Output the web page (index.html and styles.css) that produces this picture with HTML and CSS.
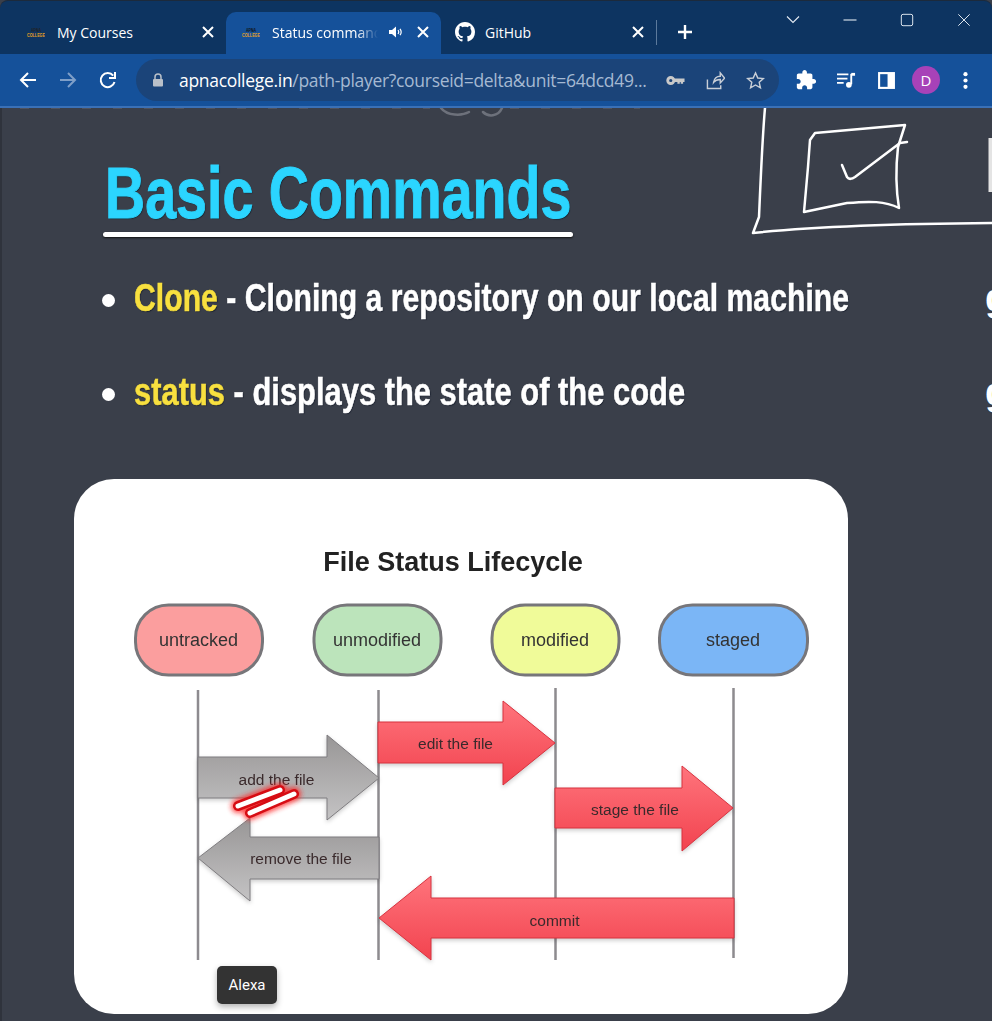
FILE: index.html
```html
<!DOCTYPE html>
<html>
  <head>
    <meta charset="utf-8">
    <title>Status command</title>
    <link rel="stylesheet" href="styles.css">
  </head>
  <body>
    <div id="tabstrip">
      <div class="tab">
        <svg class="favicon" viewBox="0 0 18 10"><text x="9" y="4.500" class="fav-top" textLength="10" lengthAdjust="spacingAndGlyphs">APNA</text><text x="9" y="9.500" class="fav-bottom" textLength="18" lengthAdjust="spacingAndGlyphs">COLLEGE</text></svg>
        <span class="tab-title">My Courses</span>
        <svg class="tab-close" viewBox="0 0 14 14"><path d="M2 2l10 10M12 2L2 12"/></svg>
      </div>
      <div class="tab active">
        <svg class="favicon" viewBox="0 0 18 10"><text x="9" y="4.500" class="fav-top" textLength="10" lengthAdjust="spacingAndGlyphs">APNA</text><text x="9" y="9.500" class="fav-bottom" textLength="18" lengthAdjust="spacingAndGlyphs">COLLEGE</text></svg>
        <span class="tab-title fade">Status command</span>
        <svg class="speaker" viewBox="0 0 14 14"><path d="M1 5h3l4-3.500v11L4 9H1z" fill="#fff"/><path d="M10 5c.9 1.200.9 2.800 0 4M12 3.800c1.400 1.900 1.400 4.500 0 6.400" class="speaker-wave"/></svg>
        <svg class="tab-close" viewBox="0 0 14 14"><path d="M2 2l10 10M12 2L2 12"/></svg>
      </div>
      <div class="tab">
        <svg class="gh-icon" viewBox="0 0 16 16"><path fill="#fff" d="M8 0C3.58 0 0 3.58 0 8c0 3.54 2.29 6.53 5.47 7.59.4.07.55-.17.55-.38 0-.19-.01-.82-.01-1.49-2.01.37-2.53-.49-2.69-.94-.09-.23-.48-.94-.82-1.13-.28-.15-.68-.52-.01-.53.63-.01 1.08.58 1.23.82.72 1.21 1.87.87 2.33.66.07-.52.28-.87.51-1.07-1.78-.2-3.64-.89-3.64-3.95 0-.87.31-1.59.82-2.15-.08-.2-.36-1.02.08-2.12 0 0 .67-.21 2.2.82.64-.18 1.32-.27 2-.27.68 0 1.36.09 2 .27 1.53-1.04 2.2-.82 2.2-.82.44 1.1.16 1.92.08 2.12.51.56.82 1.27.82 2.15 0 3.07-1.87 3.75-3.65 3.95.29.25.54.73.54 1.48 0 1.07-.01 1.93-.01 2.2 0 .21.15.46.55.38A8.013 8.013 0 0016 8c0-4.42-3.58-8-8-8z"/></svg>
        <span class="tab-title">GitHub</span>
        <svg class="tab-close" viewBox="0 0 14 14"><path d="M2 2l10 10M12 2L2 12"/></svg>
      </div>
      <div class="tab-sep"></div>
      <svg class="new-tab" viewBox="0 0 16 16"><path d="M8 1v14M1 8h14"/></svg>
      <div class="win-controls">
        <svg class="win-btn" viewBox="0 0 16 12"><path d="M2 2.500l6 6 6-6"/></svg>
        <svg class="win-btn" viewBox="0 0 16 12"><path d="M1.500 6h13"/></svg>
        <svg class="win-btn" viewBox="0 0 16 16"><rect x="1.500" y="1.500" width="13" height="13" rx="2"/></svg>
        <svg class="win-btn" viewBox="0 0 16 16"><path d="M1.500 1.500l13 13M14.500 1.500l-13 13"/></svg>
      </div>
    </div>

    <div id="toolbar">
      <svg class="nav-icon" viewBox="0 0 18 18"><path d="M17 9H2M9 2L2 9l7 7"/></svg>
      <svg class="nav-icon dim" viewBox="0 0 18 18"><path d="M1 9h15M9 2l7 7-7 7"/></svg>
      <svg class="nav-icon" viewBox="0 0 18 18"><path d="M15.500 11a7 7 0 1 1-1.300-6.300"/><path d="M16 1v6h-6" class="solid"/></svg>
      <div id="omnibox">
        <svg class="lock" viewBox="0 0 12 14"><path d="M3 6V4a3 3 0 0 1 6 0v2" fill="none" stroke="#b9c0c9" stroke-width="1.500"/><rect x="1" y="6" width="10" height="7.500" rx="1" fill="#b9c0c9"/></svg>
        <div class="url"><span class="host">apnacollege.in</span>/path-player?courseid=delta&amp;unit=64dcd49...</div>
        <svg class="omni-icon key" viewBox="0 0 20 12"><circle cx="5" cy="6" r="3.200" fill="none" stroke="#c9c9c9" stroke-width="3"/><path d="M8 4h11.500v3.500H18v2h-2.500v-2h-1v2H12v-2H8z" fill="#c9c9c9"/></svg>
        <svg class="omni-icon share" viewBox="0 0 20 20"><path d="M1.500 9v9.500h14V15M8 12c.5-4 3.500-6.500 7-6.500V2l4.500 5.500L15 12.500V9c-3 0-5.500 1-7 3z"/></svg>
        <svg class="omni-icon star" viewBox="0 0 20 20"><path d="M10 2l2.400 5.400 5.900.6-4.400 3.900 1.300 5.800L10 14.700 4.800 17.700l1.300-5.800L1.700 8l5.900-.6z"/></svg>
      </div>
      <svg class="tool-icon puzzle" viewBox="0 0 24 24"><path fill="#fff" d="M20.500 11H19V7c0-1.100-.9-2-2-2h-4V3.500C13 2.120 11.880 1 10.500 1S8 2.120 8 3.500V5H4c-1.100 0-1.990.9-1.990 2v3.800H3.500c1.490 0 2.700 1.210 2.700 2.700s-1.210 2.700-2.700 2.700H2V20c0 1.100.9 2 2 2h3.800v-1.500c0-1.490 1.210-2.700 2.700-2.700 1.490 0 2.700 1.210 2.700 2.700V22H17c1.100 0 2-.9 2-2v-4h1.500c1.380 0 2.500-1.120 2.500-2.500S21.880 11 20.500 11z"/></svg>
      <svg class="tool-icon" viewBox="0 0 20 18"><path d="M0 2.500h12M0 7h11M0 11.500h7" stroke="#fff" stroke-width="1.800" fill="none"/><path d="M15 2v11" stroke="#fff" stroke-width="2" fill="none"/><path d="M15 1h4v3h-4z" fill="#fff"/><circle cx="12.500" cy="13.500" r="3" fill="#fff"/></svg>
      <svg class="tool-icon" viewBox="0 0 18 18"><rect x="1" y="1" width="16" height="16" fill="#fff"/><rect x="3" y="3" width="7" height="12" fill="#14519a"/></svg>
      <div class="avatar">D</div>
      <svg class="tool-icon" viewBox="0 0 18 18"><circle cx="9" cy="3" r="2" fill="#fff"/><circle cx="9" cy="9" r="2" fill="#fff"/><circle cx="9" cy="15" r="2" fill="#fff"/></svg>
    </div>

    <div id="slide">
      <h1 class="heading">Basic Commands</h1>
      <div class="heading-rule"></div>
      <ul class="points">
        <li class="point"><span class="dot"></span><span class="point-text clone"><b>Clone</b> - Cloning a repository on our local machine</span><span class="cut">g</span></li>
        <li class="point"><span class="dot"></span><span class="point-text"><b>status</b> - displays the state of the code</span><span class="cut">g</span></li>
      </ul>

      <div class="card">
        <svg class="lifecycle" viewBox="74 479 774 535">
          <defs>
            <linearGradient id="red" x1="0" y1="0" x2="0" y2="1"><stop offset="0" stop-color="#ff747c"/><stop offset="1" stop-color="#f2434f"/></linearGradient>
            <linearGradient id="grey" x1="0" y1="0" x2="0" y2="1"><stop offset="0" stop-color="#989696"/><stop offset="1" stop-color="#c4c3c4"/></linearGradient>
            <filter id="glow" x="-30%" y="-60%" width="160%" height="220%"><feGaussianBlur stdDeviation="2.500"/></filter>
          </defs>
          <text x="453" y="571" class="life-title">File Status Lifecycle</text>

          <rect x="135.500" y="605" width="127" height="70" rx="33" class="pill" fill="#fb9e9e"/>
          <rect x="314" y="605" width="127" height="70" rx="33" class="pill" fill="#bce4bb"/>
          <rect x="492" y="605" width="127" height="70" rx="33" class="pill" fill="#f0fb99"/>
          <rect x="659.500" y="605" width="148" height="70" rx="33" class="pill" fill="#7bb6f6"/>
          <text x="198.500" y="646" class="pill-label">untracked</text>
          <text x="377" y="646" class="pill-label">unmodified</text>
          <text x="555" y="646" class="pill-label">modified</text>
          <text x="733" y="646" class="pill-label">staged</text>

          <path d="M198 690V960M378.500 690V960M555.500 688V960M733.500 688V958" class="life-line"/>

          <path d="M198 757H327V735L379 778 327 820V798H198z" fill="url(#grey)" class="grey-arrow"/>
          <path d="M379 837H250V818L198 858 250 901V879H379z" fill="url(#grey)" class="grey-arrow"/>
          <path d="M378 722H503V701L555 743 503 785V763H378z" fill="url(#red)" class="red-arrow"/>
          <path d="M555 788H682V766L733 808 682 851V828H555z" fill="url(#red)" class="red-arrow"/>
          <path d="M734 898H431V876L379 918 431 960V938H734z" fill="url(#red)" class="red-arrow"/>

          <text x="276.500" y="785" class="arrow-label">add the file</text>
          <text x="455.500" y="749" class="arrow-label">edit the file</text>
          <text x="635" y="815" class="arrow-label">stage the file</text>
          <text x="301" y="864" class="arrow-label">remove the file</text>
          <text x="554.500" y="926" class="arrow-label">commit</text>

          <path d="M238 806L280 790M250 813L294 794" class="mark-glow" filter="url(#glow)"/>
          <path d="M238 806L280 790M250 813L294 794" class="mark-red"/>
          <path d="M238 806L280 790M250 813L294 794" class="mark-white"/>
        </svg>
      </div>

      <svg class="board" viewBox="0 108 992 140">
        <path d="M20 108H430M510 108H640" class="cut-tips"/>
        <path d="M441 108C447 116 462 116 469 112M483 112C488 117 498 117 502 108" class="cut-arcs"/>
        <path d="M765 108C763 130 761 170 759 217L753 233C800 228 860 224 992 223"/>
        <path d="M815 133L905 125 898 147C896 165 896 190 899 208 885 201 870 201 847 203L804 212 808 167 810 140z"/>
        <path d="M842 165L847 177C849 180 852 179 855 177L900 143 907 142"/>
        <path d="M991 138V192" class="board-thick"/>
      </svg>
      <div class="tooltip">Alexa</div>
    </div>
  </body>
</html>
```

FILE: styles.css
```css
* {
  box-sizing: border-box;
}
html, body {
  margin: 0;
  height: 100%;
  overflow: hidden;
}
body {
  display: flex;
  flex-direction: column;
  background: #3a3f4a;
  font-family: "Open Sans", "Noto Sans", sans-serif;
}

/* tab strip */
#tabstrip {
  height: 54px;
  padding-left: 11px;
  display: flex;
  align-items: flex-end;
  background: #0d3461;
  border-top: 1px solid #1c2a3c;
  border-radius: 8px 8px 0 0;
}
.tab {
  width: 215px;
  height: 42px;
  padding: 0 11px 2px 16px;
  display: flex;
  align-items: center;
  color: #fff;
  font-size: 14px;
}
.tab.active {
  background: #15519a;
  border-radius: 10px 10px 0 0;
}
.favicon {
  width: 18px;
  height: 10px;
  margin-right: 12px;
  flex: none;
}
.fav-top {
  font: bold 4.500px "Liberation Sans", sans-serif;
  fill: #222;
  text-anchor: middle;
}
.fav-bottom {
  font: bold 5px "Liberation Sans", sans-serif;
  fill: #e3a11f;
  text-anchor: middle;
}
.tab.active .fav-top {
  fill: #111;
}
.gh-icon {
  width: 20px;
  height: 20px;
  margin-left: -2px;
  margin-right: 10px;
  flex: none;
}
.tab-title {
  flex: 1;
  white-space: nowrap;
  overflow: hidden;
}
.tab-title.fade {
  -webkit-mask-image: linear-gradient(to right, #000 80%, transparent 100%);
  mask-image: linear-gradient(to right, #000 80%, transparent 100%);
}
.speaker {
  width: 14px;
  height: 14px;
  margin: 0 14px 0 10px;
  flex: none;
}
.speaker-wave {
  fill: none;
  stroke: #fff;
  stroke-width: 1.200;
}
.tab-close {
  width: 14px;
  height: 14px;
  flex: none;
  fill: none;
  stroke: #fff;
  stroke-width: 2;
}
.tab-sep {
  width: 1px;
  height: 25px;
  margin-bottom: 9px;
  background: #5c7a9c;
}
.new-tab {
  width: 16px;
  height: 16px;
  margin: 0 0 14px 20px;
  fill: none;
  stroke: #fff;
  stroke-width: 2.400;
}
.win-controls {
  margin-left: auto;
  align-self: flex-start;
  padding: 12px 20px 0 0;
  display: flex;
  gap: 41px;
  align-items: center;
}
.win-btn {
  width: 16px;
  height: 14px;
  fill: none;
  stroke: #e4ebf3;
  stroke-width: 1.100;
}

/* toolbar */
#toolbar {
  height: 54px;
  padding: 0 17px 0 19px;
  display: flex;
  align-items: center;
  background: #15519a;
  border-bottom: 2px solid #3a70b6;
}
.nav-icon {
  width: 18px;
  height: 18px;
  margin-right: 22px;
  flex: none;
  fill: none;
  stroke: #fff;
  stroke-width: 2;
}
.nav-icon.dim {
  stroke: #7f9fc8;
}
.nav-icon .solid {
  fill: none;
  stroke: #fff;
}
#omnibox {
  width: 643px;
  height: 42px;
  margin: 0 0 0 -3px;
  padding: 0 15px 0 16px;
  display: flex;
  align-items: center;
  background: #1b4479;
  border-radius: 21px;
  flex: none;
}
.lock {
  width: 12px;
  height: 14px;
  margin-right: 15px;
  flex: none;
}
.url {
  width: 467px;
  font-size: 17.500px;
  letter-spacing: -.3px;
  color: #a5b9d2;
  white-space: nowrap;
  overflow: hidden;
  flex: none;
}
.host {
  color: #fff;
}
.omni-icon {
  width: 19px;
  height: 19px;
  margin-left: 21px;
  flex: none;
}
.omni-icon.key {
  margin-left: 20px;
}
.share, .star {
  fill: none;
  stroke: #c9cfd7;
  stroke-width: 1.500;
}
.tool-icon {
  width: 19px;
  height: 19px;
  margin-left: 21px;
  flex: none;
}
.puzzle {
  margin-left: 16px;
  width: 22px;
  height: 22px;
}
.puzzle + .tool-icon {
  margin-left: 20px;
}
.avatar {
  width: 28px;
  height: 28px;
  margin-left: 16px;
  border-radius: 50%;
  background: #a742b8;
  color: #fff;
  font-size: 15px;
  line-height: 28px;
  text-align: center;
  flex: none;
}
.avatar + .tool-icon {
  margin-left: 16px;
}

/* slide */
#slide {
  position: relative;
  flex: 1;
  overflow: hidden;
  padding-top: 45px;
  border-left: 2px solid #2f333c;
  font-family: "Liberation Sans", sans-serif;
}
.heading {
  margin: 0 0 0 103px;
  font-size: 72px;
  line-height: 80px;
  font-weight: bold;
  color: #2bd5ff;
  -webkit-text-stroke: 1px #2bd5ff;
  text-shadow: 1px 1px 1px #10212c;
  white-space: nowrap;
  transform: scaleX(.772);
  transform-origin: left;
}
.heading-rule {
  width: 470px;
  height: 5px;
  margin: -1px 0 0 101px;
  background: #fff;
  border-radius: 3px;
  box-shadow: 0 1px 2px #111;
}
.points {
  list-style: none;
  margin: 14px 0 0 0;
  padding: 0 0 0 100px;
}
.point {
  display: grid;
  grid-template-columns: 32px 851px auto;
  align-items: center;
  height: 94px;
  font-size: 38px;
  line-height: 54px;
  font-weight: bold;
  color: #fff;
  text-shadow: 1px 1px 1px #1c2230;
}
.point-text {
  white-space: nowrap;
  -webkit-text-stroke: .5px currentColor;
  transform: scaleX(.813);
  transform-origin: left;
}
.point-text.clone {
  transform: scaleX(.795);
}
.point-text b {
  color: #f8e03f;
}
.dot {
  width: 13px;
  height: 13px;
  margin: 5px 0 0 0;
  border-radius: 50%;
  background: #fff;
}
.cut {
  color: #fff;
}

/* lifecycle card */
.card {
  width: 774px;
  height: 535px;
  margin: 40px 0 0 72px;
  background: #fff;
  border-radius: 40px;
}
.lifecycle {
  display: block;
  width: 774px;
  height: 535px;
  font-family: "Liberation Sans", sans-serif;
  filter: blur(.6px);
}
.life-title {
  font-size: 27px;
  font-weight: bold;
  fill: #222;
  text-anchor: middle;
}
.pill {
  stroke: #77767a;
  stroke-width: 3;
}
.pill-label {
  font-size: 18px;
  fill: #333;
  text-anchor: middle;
}
.life-line {
  fill: none;
  stroke: #8d8b8f;
  stroke-width: 2.500;
}
.grey-arrow {
  stroke: #7f7d80;
  stroke-width: 1;
  filter: drop-shadow(0 2px 2px rgba(0, 0, 0, .2));
}
.red-arrow {
  stroke: #d8323f;
  stroke-width: 1;
  filter: drop-shadow(0 2px 2px rgba(0, 0, 0, .2));
}
.arrow-label {
  font-size: 15.500px;
  fill: #3a2a2c;
  text-anchor: middle;
}
.mark-glow, .mark-red, .mark-white {
  fill: none;
  stroke-linecap: round;
}
.mark-glow {
  stroke: #ff2020;
  stroke-width: 14;
  opacity: .8;
}
.mark-red {
  stroke: #d60d14;
  stroke-width: 10;
}
.mark-white {
  stroke: #fff;
  stroke-width: 5;
}

/* pen strokes drawn over the slide */
.board {
  position: absolute;
  left: -2px;
  top: 0;
  width: 992px;
  height: 140px;
  fill: none;
  stroke: #fff;
  stroke-width: 2.500;
  stroke-linejoin: round;
  stroke-linecap: round;
}
.board-thick {
  stroke-width: 5;
  stroke: #e4e4e4;
  stroke-linecap: butt;
}
/* bottoms of the slide line above, cut off by the toolbar */
.cut-tips {
  stroke: #555a65;
  stroke-width: 1.500;
  stroke-linecap: butt;
  stroke-dasharray: 9 22;
}
.cut-arcs {
  stroke: #6d717b;
  stroke-width: 2.500;
}
.tooltip {
  position: absolute;
  left: 215px;
  top: 858px;
  width: 60px;
  height: 38px;
  background: #333;
  border-radius: 5px;
  color: #fff;
  font: 15px/38px Roboto, sans-serif;
  text-align: center;
  box-shadow: 0 3px 6px rgba(0, 0, 0, .3);
}
```
